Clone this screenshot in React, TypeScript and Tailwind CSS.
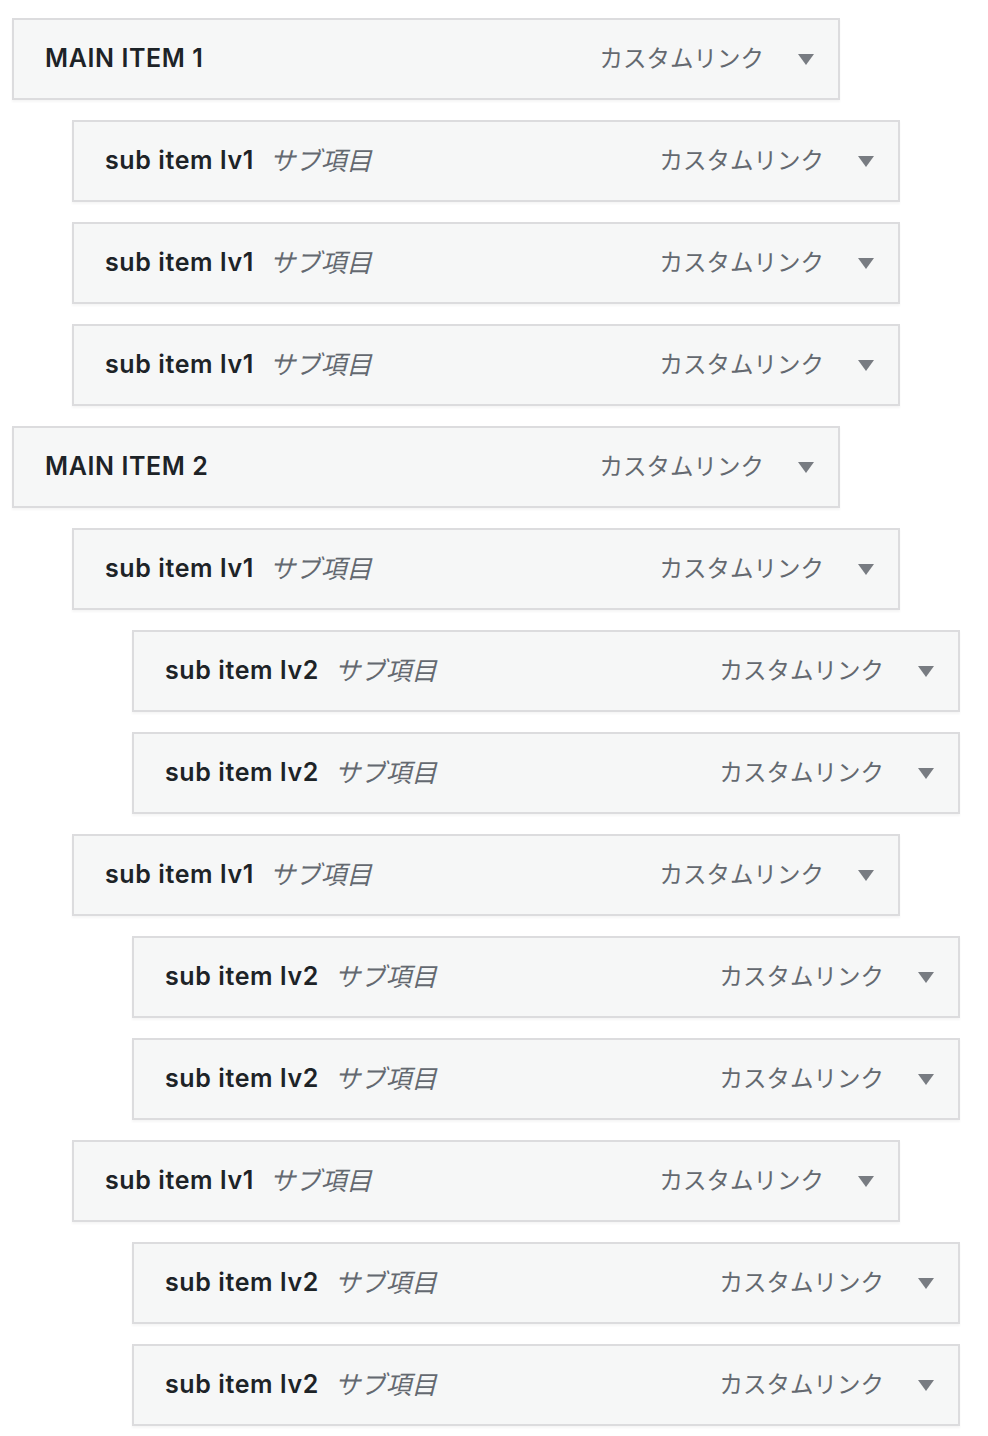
const items: { level: number; title: string; sub?: string }[] = [
  { level: 0, title: "MAIN ITEM 1" },
  { level: 1, title: "sub item lv1", sub: "サブ項目" },
  { level: 1, title: "sub item lv1", sub: "サブ項目" },
  { level: 1, title: "sub item lv1", sub: "サブ項目" },
  { level: 0, title: "MAIN ITEM 2" },
  { level: 1, title: "sub item lv1", sub: "サブ項目" },
  { level: 2, title: "sub item lv2", sub: "サブ項目" },
  { level: 2, title: "sub item lv2", sub: "サブ項目" },
  { level: 1, title: "sub item lv1", sub: "サブ項目" },
  { level: 2, title: "sub item lv2", sub: "サブ項目" },
  { level: 2, title: "sub item lv2", sub: "サブ項目" },
  { level: 1, title: "sub item lv1", sub: "サブ項目" },
  { level: 2, title: "sub item lv2", sub: "サブ項目" },
  { level: 2, title: "sub item lv2", sub: "サブ項目" },
];

const indent = ["ml-0", "ml-[60px]", "ml-[120px]"];

function MenuItem({ level, title, sub }: { level: number; title: string; sub?: string }) {
  return (
    <div
      className={`${indent[level]} w-[828px] h-[82px] flex items-center bg-[#f6f7f7] border-2 border-[#dcdcde] shadow-[0_2px_2px_rgba(0,0,0,0.04)] pl-[31px] pr-[24px]`}
    >
      <span className="text-[25px] font-semibold text-[#1d2327] tracking-[0.6px]">{title}</span>
      {sub && <span className="ml-[16px] text-[25.5px] italic text-[#646970]">{sub}</span>}
      <span className="ml-auto text-[23.5px] text-[#646970]">カスタムリンク</span>
      <svg className="ml-[34px]" width="16" height="11" viewBox="0 0 16 11">
        <polygon points="0,0 16,0 8,11" fill="#787c82" />
      </svg>
    </div>
  );
}

export default function App() {
  return (
    <div
      className="bg-white min-h-[1436px] pt-[18px] pl-[12px] flex flex-col gap-[20px]"
      style={{ fontFamily: 'Inter, "Noto Sans CJK JP", sans-serif' }}
    >
      {items.map((it, i) => (
        <MenuItem key={i} {...it} />
      ))}
    </div>
  );
}
